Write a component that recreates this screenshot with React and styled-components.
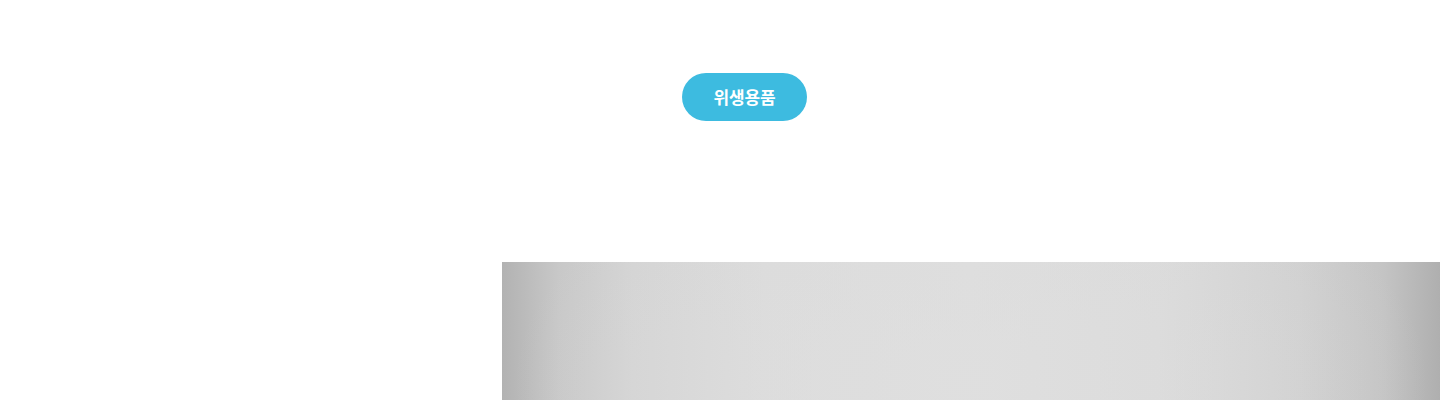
import React from "react";
import styled, { createGlobalStyle } from "styled-components";

const GlobalStyle = createGlobalStyle`
  html, body {
    margin: 0;
    padding: 0;
    background: #ffffff;
    font-family: "Noto Sans CJK KR", "Noto Sans", sans-serif;
  }
`;

const Page = styled.div`
  width: 1440px;
  height: 400px;
  overflow: hidden;
  display: flex;
  flex-direction: column;
`;

const TabRow = styled.div`
  display: flex;
  padding: 73px 0 0 682px;
`;

const CategoryButton = styled.button`
  width: 125px;
  height: 48px;
  border: none;
  border-radius: 24px;
  background: ${(p) => (p.active ? "#3dbbe0" : "#eeeeee")};
  color: ${(p) => (p.active ? "#ffffff" : "#555555")};
  font-family: "Noto Sans CJK KR", "Noto Sans", sans-serif;
  font-size: 17px;
  font-weight: 700;
  letter-spacing: -0.2px;
  display: flex;
  align-items: center;
  justify-content: center;
  cursor: pointer;
  padding: 0 0 2px;
`;

const Visual = styled.div`
  margin: 141px 0 0 502px;
  width: 938px;
  height: 300px;
  flex-shrink: 0;
  background:
    radial-gradient(ellipse 70% 120% at 50% 40%, rgba(224, 224, 224, 0.6) 0%, rgba(224, 224, 224, 0) 70%),
    linear-gradient(
      to right,
      #b2b2b2 0%,
      #c8c8c8 6%,
      #d4d4d4 14%,
      #dbdbdb 28%,
      #dddddd 50%,
      #dadada 70%,
      #d0d0d0 85%,
      #c4c4c4 94%,
      #afafaf 100%
    );
`;

export default function App() {
  return (
    <>
      <GlobalStyle />
      <Page>
        <TabRow>
          <CategoryButton active>위생용품</CategoryButton>
        </TabRow>
        <Visual />
      </Page>
    </>
  );
}
